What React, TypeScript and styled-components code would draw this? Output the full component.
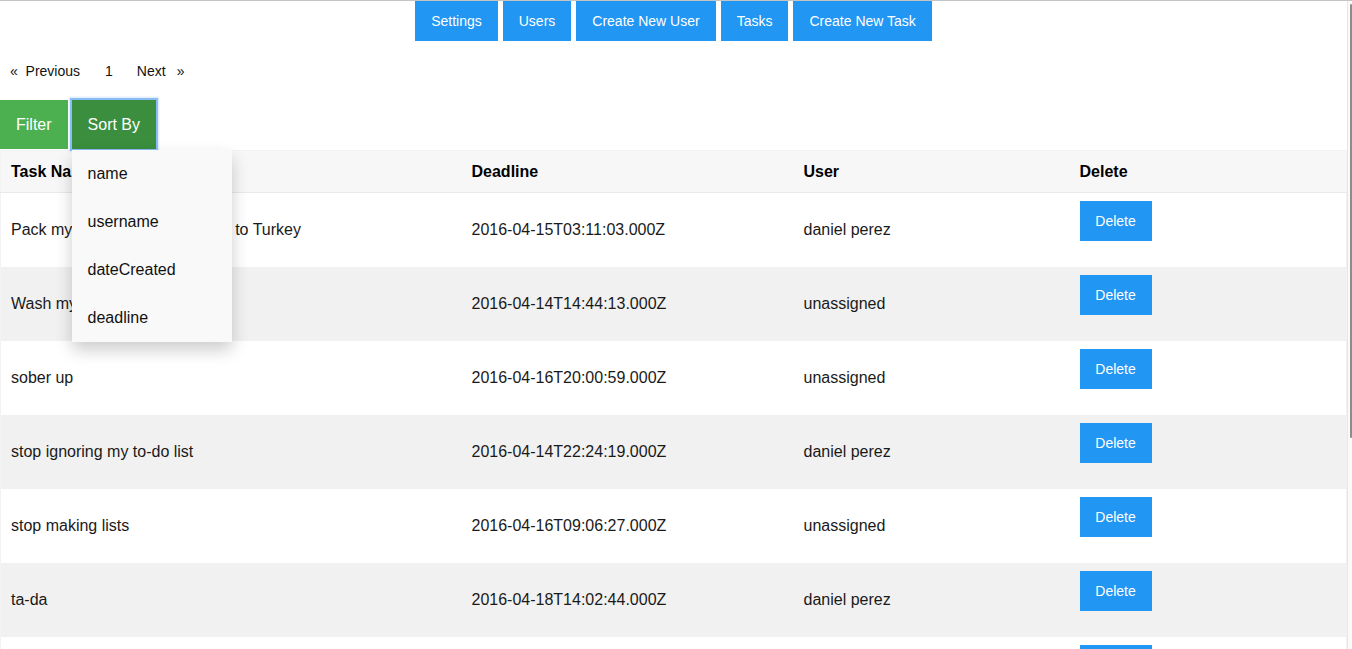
import React from 'react';
import styled, { createGlobalStyle } from 'styled-components';

type Task = {
  name: string;
  deadline: string;
  user: string;
};

const tasks: Task[] = [
  { name: 'Pack my bags for the long haul to Turkey', deadline: '2016-04-15T03:11:03.000Z', user: 'daniel perez' },
  { name: 'Wash my car', deadline: '2016-04-14T14:44:13.000Z', user: 'unassigned' },
  { name: 'sober up', deadline: '2016-04-16T20:00:59.000Z', user: 'unassigned' },
  { name: 'stop ignoring my to-do list', deadline: '2016-04-14T22:24:19.000Z', user: 'daniel perez' },
  { name: 'stop making lists', deadline: '2016-04-16T09:06:27.000Z', user: 'unassigned' },
  { name: 'ta-da', deadline: '2016-04-18T14:02:44.000Z', user: 'daniel perez' },
  { name: 'finish the project', deadline: '2016-04-19T10:00:00.000Z', user: 'unassigned' },
];

const navLinks = ['Settings', 'Users', 'Create New User', 'Tasks', 'Create New Task'];
const sortOptions = ['name', 'username', 'dateCreated', 'deadline'];

const App: React.FC = () => {
  return (
    <>
      <GlobalStyle />
      <Page>
        <Main>
          <Nav>
            {navLinks.map((link) => (
              <NavButton key={link}>{link}</NavButton>
            ))}
          </Nav>

          <Pagination>
            <PageLink gap={25}>«&nbsp;&nbsp;Previous</PageLink>
            <PageLink gap={24}>1</PageLink>
            <PageLink gap={11}>Next</PageLink>
            <PageLink>»</PageLink>
          </Pagination>

          <Controls>
            <GreenButton>Filter</GreenButton>
            <SortWrap>
              <GreenButton active>Sort By</GreenButton>
              <Dropdown>
                {sortOptions.map((opt) => (
                  <DropdownItem key={opt}>{opt}</DropdownItem>
                ))}
              </Dropdown>
            </SortWrap>
          </Controls>

          <Table>
            <colgroup>
              <col style={{ width: 461 }} />
              <col style={{ width: 332 }} />
              <col style={{ width: 276 }} />
              <col />
            </colgroup>
            <thead>
              <HeadRow>
                <Th>Task Name</Th>
                <Th>Deadline</Th>
                <Th>User</Th>
                <Th>Delete</Th>
              </HeadRow>
            </thead>
            <tbody>
              {tasks.map((task, i) => (
                <Row key={task.name} striped={i % 2 === 1}>
                  <Td>{task.name}</Td>
                  <Td>{task.deadline}</Td>
                  <Td>{task.user}</Td>
                  <ButtonCell>
                    <DeleteButton>Delete</DeleteButton>
                  </ButtonCell>
                </Row>
              ))}
            </tbody>
          </Table>
        </Main>
        <ScrollTrack>
          <ScrollThumb />
        </ScrollTrack>
      </Page>
    </>
  );
};

const GlobalStyle = createGlobalStyle`
  html, body {
    margin: 0;
    padding: 0;
    background: #fff;
    overflow: hidden;
  }
  body {
    font-family: "Liberation Sans", Arial, Helvetica, sans-serif;
    color: #111;
  }
`;

const Page = styled.div`
  display: flex;
  height: 649px;
  overflow: hidden;
  border-top: 1px solid #c4c4c4;
  box-sizing: border-box;
`;

const Main = styled.div`
  flex: 1;
  min-width: 0;
`;

const Nav = styled.nav`
  display: flex;
  justify-content: center;
  gap: 5px;
`;

const NavButton = styled.a`
  display: flex;
  align-items: center;
  height: 40px;
  padding: 0 16px;
  background-color: #2196f3;
  color: #fff;
  font-size: 14px;
  cursor: pointer;
`;

const Pagination = styled.div`
  display: flex;
  align-items: center;
  height: 36px;
  margin-top: 12px;
  padding-left: 10px;
  font-size: 14px;
  color: #111;
`;

const PageLink = styled.a<{ gap?: number }>`
  margin-right: ${({ gap }) => (gap ? `${gap}px` : '0')};
  cursor: pointer;
`;

const Controls = styled.div`
  display: flex;
  align-items: flex-start;
  margin-top: 11px;
  height: 50px;
`;

const SortWrap = styled.div`
  position: relative;
  margin-left: 4px;
`;

const GreenButton = styled.button<{ active?: boolean }>`
  height: 49px;
  padding: 0 16px;
  border: none;
  border-radius: 0;
  background-color: ${({ active }) => (active ? '#3a8e3d' : '#4caf50')};
  color: #fff;
  font-family: inherit;
  font-size: 16px;
  cursor: pointer;
  box-shadow: ${({ active }) =>
    active ? '0 0 0 2px rgba(126, 180, 244, 0.85), 0 0 2px 3px rgba(126, 180, 244, 0.3)' : 'none'};
`;

const Dropdown = styled.div`
  position: absolute;
  top: calc(100% + 1px);
  left: 0;
  width: 160px;
  background-color: #f9f9f9;
  box-shadow: 0 8px 16px rgba(0, 0, 0, 0.2);
  z-index: 2;
`;

const DropdownItem = styled.div`
  padding: 0 16px;
  height: 48px;
  line-height: 48px;
  font-size: 16px;
  color: #111;
`;

const Table = styled.table`
  width: 100%;
  border-collapse: collapse;
  table-layout: fixed;
  font-size: 16px;
  border: 1px solid #f3f3f3;
`;

const HeadRow = styled.tr`
  height: 42px;
  background-color: #f7f7f7;
  border-bottom: 1px solid #e9e9e9;
`;

const Th = styled.th`
  text-align: left;
  font-weight: bold;
  padding: 0 10px;
  color: #000;
`;

const Row = styled.tr<{ striped: boolean }>`
  height: 74px;
  background-color: ${({ striped }) => (striped ? '#f1f1f1' : '#fff')};
`;

const Td = styled.td`
  padding: 0 10px;
  vertical-align: middle;
  white-space: nowrap;
  overflow: hidden;
  color: #1a1a1a;
`;

const ButtonCell = styled.td`
  padding: 8px 10px 26px;
  vertical-align: top;
`;

const DeleteButton = styled.button`
  width: 72px;
  height: 40px;
  border: none;
  border-radius: 0;
  background-color: #2196f3;
  color: #fff;
  font-family: inherit;
  font-size: 14px;
  cursor: pointer;
`;

const ScrollTrack = styled.div`
  width: 5px;
  flex-shrink: 0;
  background-color: #fafafa;
  border-left: 1px solid #e6e6e6;
  box-sizing: border-box;
  padding: 3px 0 0 2px;
`;

const ScrollThumb = styled.div`
  width: 2px;
  height: 434px;
  background-color: #8c8c8c;
  border-radius: 1px;
`;

export default App;
